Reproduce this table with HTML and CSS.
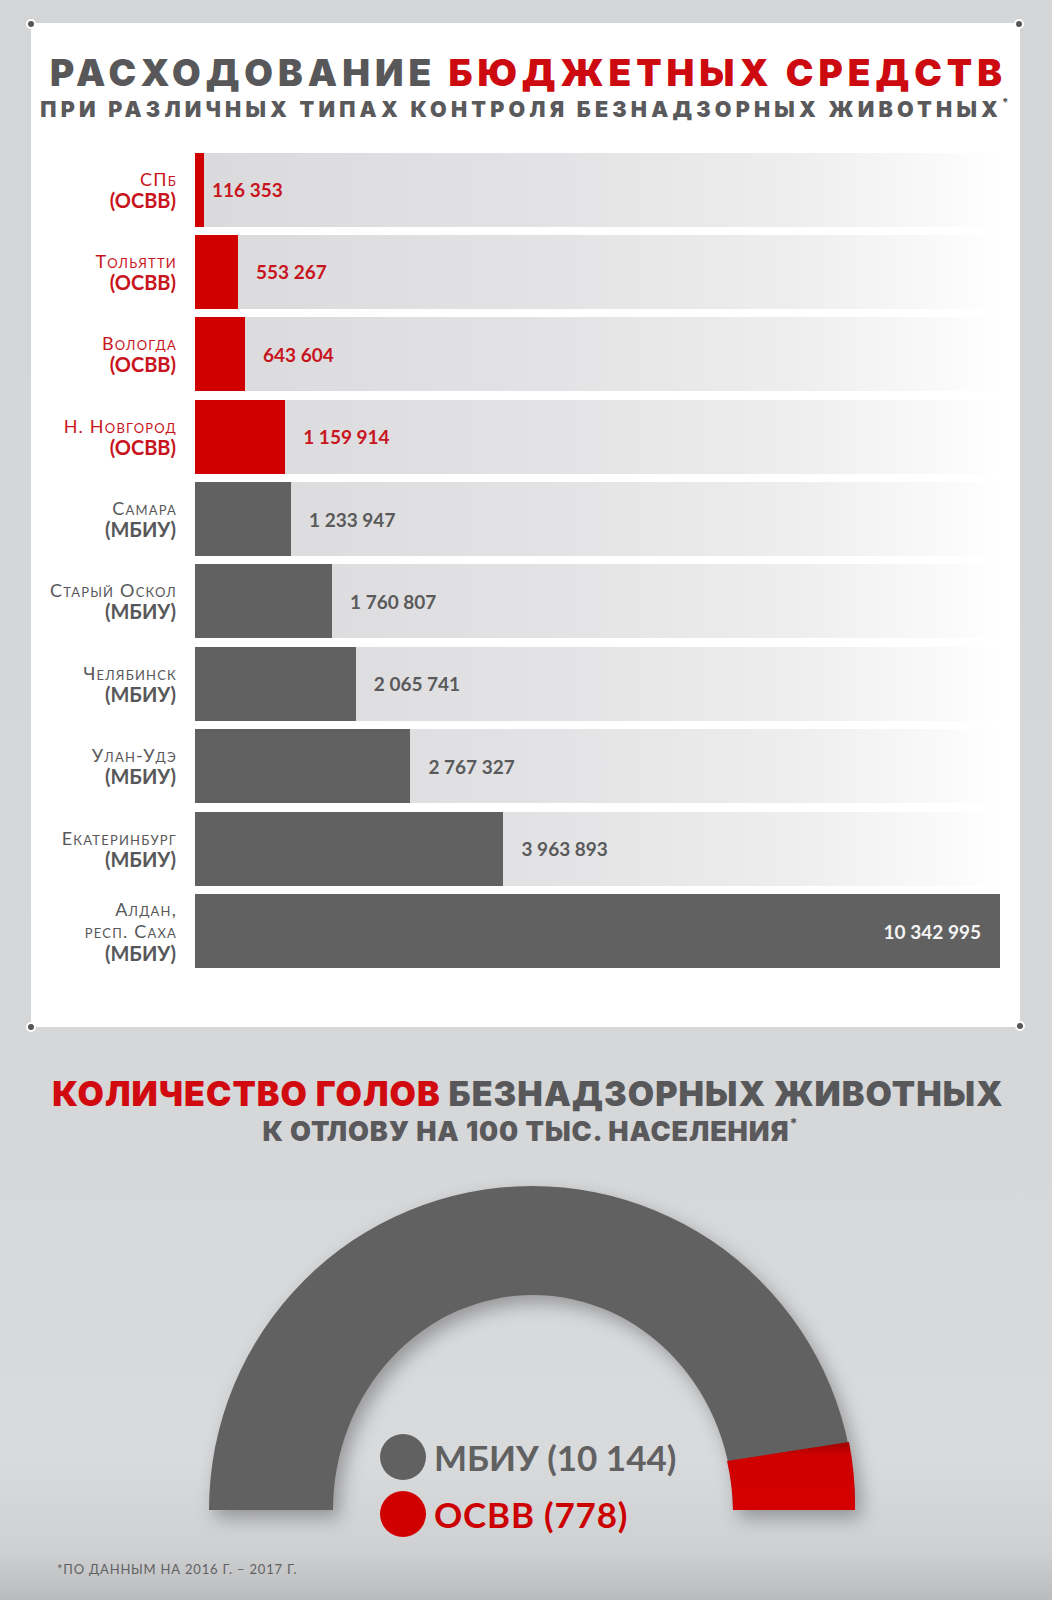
FILE: index.html
```html
<!DOCTYPE html>
<html lang="ru">
<head>
<meta charset="utf-8">
<title>Расходование бюджетных средств</title>
<link rel="stylesheet" href="styles.css">
</head>
<body>
<main class="page">
  <section class="card">
    <span class="dot dot-tl"></span><span class="dot dot-tr"></span>
    <span class="dot dot-bl"></span><span class="dot dot-br"></span>
    <h1 class="title"><span class="gray">РАСХОДОВАНИЕ</span> <span class="red">БЮДЖЕТНЫХ СРЕДСТВ</span></h1>
    <p class="subtitle">ПРИ РАЗЛИЧНЫХ ТИПАХ КОНТРОЛЯ БЕЗНАДЗОРНЫХ ЖИВОТНЫХ<sup>*</sup></p>

    <div class="chart">
      <div class="label osvv"><span class="city">СПб</span><span class="kind">(ОСВВ)</span></div>
      <div class="track"><div class="fill osvv" style="width:1.12%"></div><span class="value osvv tight">116&nbsp;353</span></div>

      <div class="label osvv"><span class="city">Тольятти</span><span class="kind">(ОСВВ)</span></div>
      <div class="track"><div class="fill osvv" style="width:5.35%"></div><span class="value osvv">553&nbsp;267</span></div>

      <div class="label osvv"><span class="city">Вологда</span><span class="kind">(ОСВВ)</span></div>
      <div class="track"><div class="fill osvv" style="width:6.22%"></div><span class="value osvv">643&nbsp;604</span></div>

      <div class="label osvv"><span class="city">Н. Новгород</span><span class="kind">(ОСВВ)</span></div>
      <div class="track"><div class="fill osvv" style="width:11.21%"></div><span class="value osvv">1&nbsp;159&nbsp;914</span></div>

      <div class="label mbiu"><span class="city">Самара</span><span class="kind">(МБИУ)</span></div>
      <div class="track"><div class="fill mbiu" style="width:11.93%"></div><span class="value mbiu">1&nbsp;233&nbsp;947</span></div>

      <div class="label mbiu"><span class="city">Старый Оскол</span><span class="kind">(МБИУ)</span></div>
      <div class="track"><div class="fill mbiu" style="width:17.02%"></div><span class="value mbiu">1&nbsp;760&nbsp;807</span></div>

      <div class="label mbiu"><span class="city">Челябинск</span><span class="kind">(МБИУ)</span></div>
      <div class="track"><div class="fill mbiu" style="width:19.97%"></div><span class="value mbiu">2&nbsp;065&nbsp;741</span></div>

      <div class="label mbiu"><span class="city">Улан-Удэ</span><span class="kind">(МБИУ)</span></div>
      <div class="track"><div class="fill mbiu" style="width:26.76%"></div><span class="value mbiu">2&nbsp;767&nbsp;327</span></div>

      <div class="label mbiu"><span class="city">Екатеринбург</span><span class="kind">(МБИУ)</span></div>
      <div class="track"><div class="fill mbiu" style="width:38.32%"></div><span class="value mbiu">3&nbsp;963&nbsp;893</span></div>

      <div class="label mbiu three"><span class="city">Алдан,</span><span class="city">респ. Саха</span><span class="kind">(МБИУ)</span></div>
      <div class="track"><div class="fill mbiu full" style="width:100%"><span class="value inside">10&nbsp;342&nbsp;995</span></div></div>
    </div>
  </section>

  <section class="heads">
    <h2 class="title2"><span class="red">КОЛИЧЕСТВО ГОЛОВ</span> <span class="gray">БЕЗНАДЗОРНЫХ ЖИВОТНЫХ</span></h2>
    <p class="subtitle2">К ОТЛОВУ НА 100 ТЫС. НАСЕЛЕНИЯ<sup>*</sup></p>

    <div class="gauge">
      <svg class="arch" viewBox="0 1160 1052 380" width="1052" height="380" aria-hidden="true">
        <defs>
          <linearGradient id="redg" x1="0" y1="0" x2="0" y2="1">
            <stop offset="0" stop-color="#a00000"/>
            <stop offset="0.2" stop-color="#cf0000"/>
            <stop offset="1" stop-color="#d40000"/>
          </linearGradient>
        </defs>
        <path class="arch-gray" d="M 209 1510 A 323 324 0 0 1 855 1510 L 733 1510 A 200 215 0 0 0 333 1510 Z"/>
        <path class="arch-red" fill="url(#redg)" d="M 733 1510 A 200 215 0 0 0 727 1461 L 849 1442 A 323 324 0 0 1 855 1510 Z"/>
      </svg>
      <ul class="legend">
        <li class="leg mbiu"><span class="bullet"></span>МБИУ (10 144)</li>
        <li class="leg osvv"><span class="bullet"></span>ОСВВ (778)</li>
      </ul>
    </div>

    <p class="note">*ПО ДАННЫМ НА 2016 Г. – 2017 Г.</p>
  </section>
</main>
</body>
</html>
```

FILE: styles.css
```css
* { box-sizing: border-box; }

html, body {
  margin: 0;
  padding: 0;
}

body {
  width: 1052px;
  min-height: 1600px;
  background: linear-gradient(to bottom, #d4d5d7 0px, #d6d7d9 1100px, #d9dadc 1460px, #cfd0d2 1550px, #babbbd 1600px);
  font-family: "Lato", "Open Sans", sans-serif;
  color: #5b5b5b;
  overflow: hidden;
}

.page {
  width: 1052px;
  height: 1600px;
}

.red { color: #cc0a0f; }
.gray { color: #58585a; }

/* ---------- card ---------- */
.card {
  position: relative;
  margin: 23px 0 0 31px;
  width: 989px;
  height: 1004px;
  background: #ffffff;
  padding-top: 31px;
}

.dot {
  position: absolute;
  width: 10px;
  height: 10px;
  border-radius: 50%;
  background: #555657;
  border: 2px solid #ffffff;
  transform: translate(-50%, -50%);
}
.dot-tl { left: 0; top: 1px; }
.dot-tr { left: 988px; top: 1px; }
.dot-bl { left: 0; top: 1004px; }
.dot-br { left: 989px; top: 1003px; }

.title {
  margin: 0;
  font-family: "Inter", "DejaVu Sans", sans-serif;
  font-weight: 900;
  font-size: 37px;
  line-height: 1;
  text-align: center;
  letter-spacing: 5px;
  white-space: nowrap;
  padding-left: 6px;
}

.subtitle {
  margin: 8px 0 0 0;
  font-family: "Inter", "DejaVu Sans", sans-serif;
  font-weight: 900;
  font-size: 21.5px;
  line-height: 1;
  text-align: center;
  color: #5a5a5c;
  letter-spacing: 4.2px;
  white-space: nowrap;
  padding-right: 2px;
}
.subtitle sup, .subtitle2 sup {
  font-size: 0.5em;
  vertical-align: top;
  position: relative;
  top: -0.1em;
  letter-spacing: 0;
}

/* ---------- bar chart ---------- */
.chart {
  margin-top: 32px;
  display: grid;
  grid-template-columns: 145px 805px;
  column-gap: 19px;
  row-gap: 8.4px;
}

.label {
  height: 74px;
  display: flex;
  flex-direction: column;
  justify-content: center;
  align-items: flex-end;
  text-align: right;
  line-height: 21px;
  white-space: nowrap;
}
.label.three { line-height: 22px; }
.label.osvv { color: #c8151d; }
.label.mbiu { color: #58585a; }

.city {
  font-size: 18px;
  font-weight: 400;
  font-variant: small-caps;
  letter-spacing: 1.2px;
  margin-right: -1px;
}
.kind {
  font-size: 20px;
  font-weight: 700;
}

.track {
  height: 74px;
  display: flex;
  align-items: center;
  background: linear-gradient(to right, #dadadc 0%, #e3e3e5 45%, #eeeeef 75%, #fbfbfb 95%, #ffffff 100%);
}

.fill {
  height: 100%;
  flex: none;
}
.fill.osvv { background: #d10000; }
.fill.mbiu { background: #616162; }
.fill.full {
  display: flex;
  align-items: center;
  justify-content: flex-end;
  padding-right: 19px;
}

.value {
  margin-left: 18px;
  font-size: 19px;
  font-weight: 700;
  white-space: nowrap;
}
.value.tight { margin-left: 8px; }
.value.osvv { color: #c8151d; }
.value.mbiu { color: #5a5a5b; }
.value.inside { color: #f4f4f4; margin-left: 0; }

/* ---------- bottom section ---------- */
.heads {
  margin-top: 50px;
}

.title2 {
  margin: 0;
  font-family: "Inter", "DejaVu Sans", sans-serif;
  font-weight: 900;
  font-size: 34px;
  line-height: 1;
  text-align: center;
  white-space: nowrap;
  letter-spacing: 1.05px;
  padding-left: 4px;
}
.title2 .red { color: #d00a0f; }

.subtitle2 {
  margin: 7px 0 0 0;
  font-family: "Inter", "DejaVu Sans", sans-serif;
  font-weight: 900;
  font-size: 27px;
  line-height: 1;
  text-align: center;
  color: #5a5a5c;
  white-space: nowrap;
  letter-spacing: 0.9px;
  padding-left: 8px;
}

.gauge {
  position: relative;
  margin-top: 15px;
  height: 380px;
}

.arch {
  display: block;
}
.arch-gray {
  fill: #616162;
  filter: drop-shadow(6px 8px 9px rgba(0, 0, 0, 0.3));
}

.legend {
  position: absolute;
  left: 380px;
  top: 274px;
  margin: 0;
  padding: 0;
  list-style: none;
  display: flex;
  flex-direction: column;
  gap: 11px;
}
.leg {
  display: flex;
  align-items: center;
  gap: 8px;
  height: 46px;
  font-family: "Lato", sans-serif;
  font-weight: 700;
  font-size: 35px;
  white-space: nowrap;
}
.leg .bullet {
  width: 46px;
  height: 46px;
  border-radius: 50%;
  flex: none;
}
.leg.mbiu { color: #616162; }
.leg.mbiu .bullet { background: #616162; }
.leg.osvv { color: #cc0000; letter-spacing: 0.8px; }
.leg.osvv .bullet { background: #d10000; }

.note {
  margin: 23px 0 0 57px;
  font-family: "Lato", sans-serif;
  font-size: 13px;
  line-height: 1;
  color: #616163;
  letter-spacing: 0.8px;
}
```
